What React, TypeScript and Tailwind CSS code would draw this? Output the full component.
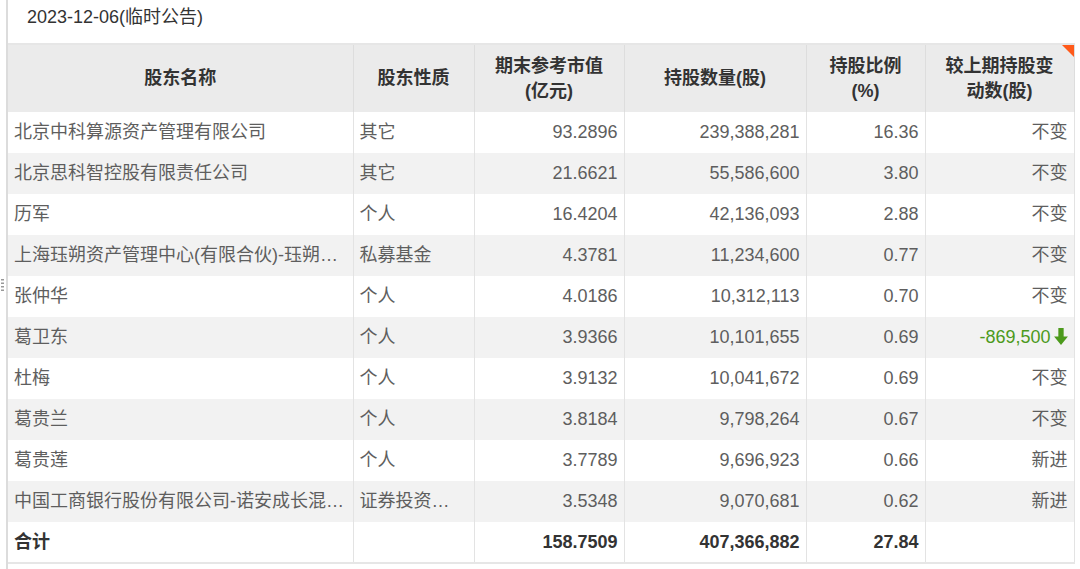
const rows: [string, string, string, string, string, string | null][] = [
  ["北京中科算源资产管理有限公司", "其它", "93.2896", "239,388,281", "16.36", "不变"],
  ["北京思科智控股有限责任公司", "其它", "21.6621", "55,586,600", "3.80", "不变"],
  ["历军", "个人", "16.4204", "42,136,093", "2.88", "不变"],
  ["上海珏朔资产管理中心(有限合伙)-珏朔…", "私募基金", "4.3781", "11,234,600", "0.77", "不变"],
  ["张仲华", "个人", "4.0186", "10,312,113", "0.70", "不变"],
  ["葛卫东", "个人", "3.9366", "10,101,655", "0.69", null],
  ["杜梅", "个人", "3.9132", "10,041,672", "0.69", "不变"],
  ["葛贵兰", "个人", "3.8184", "9,798,264", "0.67", "不变"],
  ["葛贵莲", "个人", "3.7789", "9,696,923", "0.66", "新进"],
  ["中国工商银行股份有限公司-诺安成长混…", "证券投资…", "3.5348", "9,070,681", "0.62", "新进"],
];

function DownArrow() {
  return (
    <svg width="14" height="17" viewBox="0 0 13 16" className="inline-block ml-[3px] -mt-[4px]">
      <path d="M4 0h5v8h4l-6.5 8L0 8h4z" fill="#4c9a1c" />
    </svg>
  );
}

export default function App() {
  return (
    <div
      className="w-[1080px] h-[569px] bg-white overflow-hidden flex"
      style={{ fontFamily: '"Liberation Sans", "Noto Sans CJK SC", sans-serif' }}
    >
      {/* left gutter with drag handle */}
      <div className="w-[6px] shrink-0 relative">
        <svg width="3" height="12" viewBox="0 0 3 12" className="absolute left-[1px] top-[279px]">
          <rect x="0" y="0" width="3" height="1.5" fill="#999" />
          <rect x="0" y="3.5" width="3" height="1.5" fill="#999" />
          <rect x="0" y="7" width="3" height="1.5" fill="#999" />
          <rect x="0" y="10.5" width="3" height="1.5" fill="#999" />
        </svg>
      </div>
      <div className="w-[2px] shrink-0 bg-[#dcdcdc]" />
      <div className="flex-1 flex flex-col">
        <div className="h-[43px] pt-[5px] pl-[19px] text-[18px] leading-[24px] text-[#333]">
          2023-12-06(临时公告)
        </div>
        <table className="table-fixed border-collapse w-[1066px] text-[18px]">
          <colgroup>
            <col className="w-[345px]" />
            <col className="w-[121px]" />
            <col className="w-[150px]" />
            <col className="w-[182px]" />
            <col className="w-[119px]" />
            <col className="w-[149px]" />
          </colgroup>
          <thead>
            <tr className="h-[68px] bg-[#ebebeb] text-[#333] leading-[25px] border-t-2 border-[#e6e6e6]">
              <th className="border-r border-[#dddddd] font-bold">股东名称</th>
              <th className="border-r border-[#dddddd] font-bold">股东性质</th>
              <th className="border-r border-[#dddddd] font-bold">期末参考市值<br />(亿元)</th>
              <th className="border-r border-[#dddddd] font-bold">持股数量(股)</th>
              <th className="border-r border-[#dddddd] font-bold">持股比例<br />(%)</th>
              <th className="border-r border-[#dddddd] font-bold relative">
                较上期持股变<br />动数(股)
                <span className="absolute right-0 top-0 w-0 h-0 border-t-[12px] border-l-[12px] border-t-[#ff5a1a] border-l-transparent" />
              </th>
            </tr>
          </thead>
          <tbody className="text-[#5e5e5e]">
            {rows.map((r, i) => (
              <tr key={i} className={`h-[41px] ${i % 2 === 1 ? "bg-[#f2f2f2]" : "bg-white"}`}>
                <td className="border-r border-[#e3e3e3] px-[6px] whitespace-nowrap overflow-hidden">{r[0]}</td>
                <td className="border-r border-[#e3e3e3] px-[6px] whitespace-nowrap overflow-hidden">{r[1]}</td>
                <td className="border-r border-[#e3e3e3] px-[6px] text-right">{r[2]}</td>
                <td className="border-r border-[#e3e3e3] px-[6px] text-right">{r[3]}</td>
                <td className="border-r border-[#e3e3e3] px-[6px] text-right">{r[4]}</td>
                <td className="border-r border-[#e3e3e3] px-[6px] text-right whitespace-nowrap">
                  {r[5] ?? (
                    <span className="text-[#4c9a1c]">
                      -869,500
                      <DownArrow />
                    </span>
                  )}
                </td>
              </tr>
            ))}
            <tr className="h-[41px] bg-white text-[#333] font-bold border-b-2 border-[#e6e6e6]">
              <td className="border-r border-[#e3e3e3] px-[6px]">合计</td>
              <td className="border-r border-[#e3e3e3] px-[6px]"></td>
              <td className="border-r border-[#e3e3e3] px-[6px] text-right">158.7509</td>
              <td className="border-r border-[#e3e3e3] px-[6px] text-right">407,366,882</td>
              <td className="border-r border-[#e3e3e3] px-[6px] text-right">27.84</td>
              <td className="border-r border-[#e3e3e3] px-[6px]"></td>
            </tr>
          </tbody>
        </table>
      </div>
    </div>
  );
}
